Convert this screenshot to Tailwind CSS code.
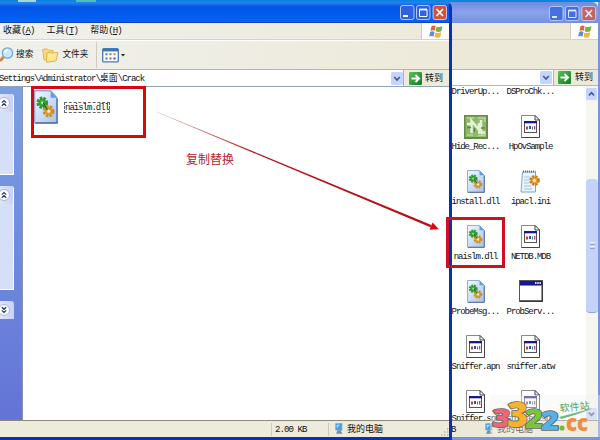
<!DOCTYPE html>
<html lang="zh-CN">
<head>
  <meta charset="UTF-8" />
  <meta name="viewport" content="width=device-width, initial-scale=1.0" />
  <title>Crack</title>
  <script src="https://cdn.jsdelivr.net/npm/@tailwindcss/browser@4"></script>
</head>
<body class="bg-[#0a86dc] overflow-hidden">

  <!-- shared icons -->
  <svg class="absolute w-0 h-0">
    <linearGradient id="page" x1="0" y1="0" x2="1" y2="1">
      <stop offset="0" stop-color="#f4faff" /><stop offset="1" stop-color="#a3c3f0" />
    </linearGradient>
    <linearGradient id="go" x1="0" y1="0" x2="1" y2="1">
      <stop offset="0" stop-color="#5cc05c" /><stop offset="1" stop-color="#0c7d1c" />
    </linearGradient>
    <symbol id="dll" viewBox="0 0 18 24" preserveAspectRatio="none">
      <path d="M.5.5H12.5L17.2 5.5V23.2H.5Z" fill="url(#page)" stroke="#8fabd6" />
      <path d="M17.3 6V23.3H1" fill="none" stroke="#55699c" />
      <path d="M12.5.5V5.5H17.2Z" fill="#5f9fe6" />
      <circle cx="6.2" cy="9" r="3.1" fill="#3cab3c" stroke="#2c992f" stroke-width="2.6" stroke-dasharray="1.7 .8" />
      <circle cx="11" cy="15" r="3.1" fill="#eaa832" stroke="#cf8d1f" stroke-width="2.6" stroke-dasharray="1.7 .8" />
      <circle cx="6.2" cy="9" r=".8" fill="#d3f2cc" /><circle cx="11" cy="15" r="1.1" fill="#eaf2fb" />
      <path d="M7 9L10 14" stroke="#1f6a28" stroke-width=".9" />
    </symbol>
    <symbol id="doc" viewBox="0 0 19 23">
      <path d="M.5.5H14L18.5 5V22.5H.5Z" fill="#fff" stroke="#8a8a8a" />
      <path d="M18.5 5V22.5H.5M14 .5V5H18.5Z" fill="#fff" stroke="#444" />
      <rect x="3.5" y="6.5" width="12" height="11" fill="#fff" stroke="#555" />
      <path d="M3 7.2H16" stroke="#15158c" stroke-width="2.2" />
      <path d="M5 11.5h2v3h-2z" fill="#c63a3a" /><path d="M8 11h2v3h-2z" fill="#3845b5" /><path d="M11 11.5h1v3h-1z" fill="#2a8b46" /><path d="M13 11h1.3v3.5h-1.3z" fill="#b33a86" />
    </symbol>
    <symbol id="ini" viewBox="0 0 22 23">
      <path d="M2.5 2H15.5V22H1Z" fill="#eaf4fd" stroke="#7fa6cc" />
      <path d="M3 1.5H15.5" stroke="#5a6b78" stroke-width="2" stroke-dasharray="1 1" />
      <path d="M4 7H10M4 10H9M4 13H9M4 16H11M4 19H12" stroke="#8fb6d8" stroke-width=".8" />
      <circle cx="14.5" cy="10.5" r="4" fill="#eaa137" stroke="#c4791a" stroke-width="2.6" stroke-dasharray="2 1.2" />
      <circle cx="14.5" cy="10.5" r="1.5" fill="#fff2cf" />
    </symbol>
    <symbol id="app" viewBox="0 0 24 22">
      <rect x=".5" y=".5" width="23" height="21" fill="#fff" stroke="#555" />
      <path d="M1 21H23.2V2" fill="none" stroke="#333" stroke-width="1.4" />
      <rect x="1" y="1" width="22" height="4" fill="#16169a" />
      <path d="M16 3H22" stroke="#ddd" stroke-width="2" stroke-dasharray="1.5 .7" />
      <path d="M1 5.5H23" stroke="#888" />
    </symbol>
    <symbol id="hide" viewBox="0 0 24 24">
      <rect width="24" height="24" fill="#668b4b" />
      <rect x="1.5" y="1.5" width="20.5" height="20.5" fill="#8dba68" />
      <path d="M3 3H10M14 3H21V7M3 20H9M14 20.5H21V16" stroke="#b8d59c" stroke-width="1.6" fill="none" />
      <path d="M3 9H9M15 8V16M7.5 18V6L17 17V5M14 17.5H21" stroke="#e4f2d5" stroke-width="2.6" fill="none" />
      <path d="M3 12.5H7M10.5 13V17M17 13H21" stroke="#5b853f" stroke-width="1.4" />
    </symbol>
    <symbol id="flag" viewBox="0 0 14 13">
      <path d="M2.5 1.2Q4.5 -.2 6.6 1L5.7 5.8Q3.6 4.8 1.4 6Z" fill="#e0643a" />
      <path d="M7.5 1.5Q10 2.7 13.4 1.2L12.4 6.2Q9.5 7.6 6.6 6.3Z" fill="#7fae48" />
      <path d="M1.2 7Q3.3 5.8 5.5 6.9L4.6 11.4Q2.4 10.5.2 11.6Z" fill="#5b8ed8" />
      <path d="M6.4 7.4Q9 8.6 12.2 7.2L11.3 12Q8.5 13.4 5.5 12Z" fill="#efb73c" />
    </symbol>
    <symbol id="arrow" viewBox="0 0 13 13">
      <rect width="13" height="13" rx="1.2" fill="url(#go)" />
      <path d="M2.5 6.5H10M6.5 3L10.2 6.5L6.5 10" fill="none" stroke="#fff" stroke-width="1.8" />
    </symbol>
    <symbol id="down" viewBox="0 0 12 13">
      <rect width="12" height="13" rx="1.5" fill="#c5d5fb" />
      <path d="M3.2 5L6 8L8.8 5" fill="none" stroke="#445a92" stroke-width="1.7" />
    </symbol>
    <symbol id="pc" viewBox="0 0 10 12">
      <path d="M1.5.8L8 0V7.6L1.5 7Z" fill="#4b9be0" stroke="#8fb4d6" stroke-width=".8" />
      <path d="M2.5 2L6 1.5L3 5.5Z" fill="#a9dcfa" />
      <path d="M3.5 7.5H6.5L8.5 10.8H2Z" fill="#6c8fb5" />
    </symbol>
    <symbol id="chev" viewBox="0 0 12 12">
      <circle cx="6" cy="6" r="5.5" fill="#fdfdff" stroke="#a9b6d6" />
      <path d="M3.8 5.6L6 3.5L8.2 5.6M3.8 8.8L6 6.7L8.2 8.8" fill="none" stroke="#23355f" stroke-width="1.2" />
    </symbol>
    <symbol id="btns" viewBox="0 0 47 15">
      <g stroke="#fff" stroke-opacity=".75" stroke-width=".9">
        <rect x=".5" y=".5" width="13.5" height="14" rx="2" fill="#2f62dc" />
        <rect x="16.5" y=".5" width="13.5" height="14" rx="2" fill="#2f62dc" />
        <rect x="33" y=".5" width="13.5" height="14" rx="2" fill="#d4523a" />
      </g>
      <path d="M3 11H8" stroke="#fff" stroke-width="2" />
      <path d="M19.5 4.5H27V11.5H19.5Z" fill="none" stroke="#fff" /><path d="M19.5 4.5H27" stroke="#fff" stroke-width="1.8" />
      <path d="M36.5 4L43 11M43 4L36.5 11" stroke="#fff" stroke-width="1.8" />
    </symbol>
  </svg>

  <main class="relative w-[600px] h-[440px] overflow-hidden font-['Liberation_Mono','Noto_Sans_CJK_SC',monospace] text-[9px] leading-none text-[#111]">
    <!-- desktop strip above the windows -->
    <div class="flex h-[2px] pl-[18px] gap-10">
      <i class="w-[18px] bg-[#a5d8cf]"></i><i class="w-5 bg-[#4cc0b4]"></i>
    </div>

    <!-- back window -->
    <section class="absolute left-[446px] top-[2px] w-[154px] h-[438px] flex flex-col bg-[#ece9d8] border-r-2 border-b-3 border-[#7b92e0]">
      <header class="h-[21px] shrink-0 flex items-center justify-end pr-[1px] rounded-tr-md bg-linear-to-b from-[#6d8ae0] via-[#8aa3ea] to-[#728fe4]">
        <svg class="w-[49px] h-[15px] opacity-75 mt-px"><use href="#btns" /></svg>
      </header>
      <div class="h-[17px] shrink-0 flex justify-end border-b border-[#d8d4c3]">
        <div class="w-[28px] bg-white border-l border-[#d0ccbb] flex items-center justify-center"><svg class="w-[14px] h-[13px]"><use href="#flag" /></svg></div>
      </div>
      <div class="h-[29px] shrink-0"></div>
      <div class="h-[17px] shrink-0 flex items-center border-y border-[#b5b8b0]">
        <div class="w-[108px] h-full bg-white flex items-center justify-end pr-px border-r border-[#9db5d6]"><svg class="w-[12px] h-[13px]"><use href="#down" /></svg></div>
        <svg class="w-[13px] h-[13px] ml-1"><use href="#arrow" /></svg>
        <span class="ml-[4px] pt-[2px]">转到</span>
      </div>
      <div class="flex-1 min-h-0 flex bg-white">
        <div class="w-[140px] overflow-hidden">
          <div id="files" class="grid grid-cols-[55px_55px] pl-[2px]"></div>
        </div>
        <div class="flex-1 flex flex-col bg-[#f6f5f0] pt-[2px]">
          <svg class="w-[11px] h-[12px] rotate-180"><use href="#down" /></svg>
          <div class="mt-[79px] mb-auto h-[134px] rounded-sm bg-[#c5d3fb] border-b border-[#8fa6dd] flex flex-col items-center justify-center gap-px">
            <i class="w-[5px] h-px bg-[#eef3ff]"></i><i class="w-[5px] h-px bg-[#8ca4de]"></i><i class="w-[5px] h-px bg-[#eef3ff]"></i><i class="w-[5px] h-px bg-[#8ca4de]"></i>
          </div>
          <svg class="w-[11px] h-[12px]"><use href="#down" /></svg>
        </div>
      </div>
      <footer class="h-[17px] shrink-0 flex items-center border-t border-[#8d8a7c]">
        <span class="ml-[5px] w-[28px] pt-[2px]">B</span>
        <svg class="w-[10px] h-[12px] ml-[5px]"><use href="#pc" /></svg>
        <span class="ml-[3px] pt-[2px]">我的电脑</span>
      </footer>
    </section>

    <!-- front window -->
    <section class="absolute left-0 top-[2px] w-[452px] h-[438px] flex flex-col bg-[#edebdb] border-r-3 border-b-3 border-[#0831b8] rounded-tr-md">
      <header class="h-[21px] shrink-0 flex items-center justify-end pr-px bg-linear-to-b from-[#2a86f4] via-[#0454e2] via-25% to-[#0262fc] border-b border-[#0a45c0]">
        <svg class="w-[49px] h-[15px] mt-px"><use href="#btns" /></svg>
      </header>
      <div class="h-[17px] shrink-0 flex border-b border-[#d8d4c3] pl-[3px] bg-linear-to-r from-[#f0f0ec] to-[#edeada]">
        <nav class="flex gap-[12px] items-center flex-1 pt-px">
          <span>收藏<span class="tracking-[-0.9px]">(<u>A</u>)</span></span>
          <span>工具<span class="tracking-[-0.9px]">(<u>T</u>)</span></span>
          <span>帮助<span class="tracking-[-0.9px]">(<u>H</u>)</span></span>
        </nav>
        <div class="w-[28px] bg-white border-l border-[#d0ccbb] flex items-center justify-center"><svg class="w-[14px] h-[13px]"><use href="#flag" /></svg></div>
      </div>
      <div class="h-[29px] shrink-0 flex items-center border-t border-white bg-linear-to-r from-[#f0f0ec] to-[#edeada]">
        <svg class="w-[14px] h-[16px]" viewBox="0 0 14 16">
          <path d="M3.5 10L0 14" stroke="#c98a4b" stroke-width="3" />
          <circle cx="7.5" cy="6" r="5.2" fill="#c6e8fb" stroke="#7aa4d6" stroke-width="1.3" />
          <path d="M5 6Q5 3.3 8 3" fill="none" stroke="#fff" stroke-width="1.3" />
        </svg>
        <span class="ml-[2px] pt-px text-[8.7px]">搜索</span>
        <svg class="w-[17px] h-[15px] ml-[9px]" viewBox="0 0 17 15">
          <path d="M.7 1.5L5 .7L6.5 2.2L11 2.4V11L2 12Z" fill="#f6dc78" stroke="#d8ad42" stroke-width=".8" />
          <path d="M5 5L8 4L9.5 5L16 4.5L14 13L4.5 14.3Z" fill="#fbe88f" stroke="#d6a738" stroke-width=".8" />
        </svg>
        <span class="ml-[3px] pt-px text-[8.7px]">文件夹</span>
        <i class="ml-[8px] w-px h-[26px] bg-[#cfccbd]"></i>
        <svg class="w-[24px] h-[15px] ml-[5px]" viewBox="0 0 24 15">
          <rect x=".7" y=".7" width="15.6" height="13.2" rx="1" fill="#f7fbff" stroke="#457bb8" stroke-width="1.3" />
          <path d="M.7 2.2H16.3" stroke="#3b73b7" stroke-width="2.4" />
          <path d="M3.5 6.2h2M3.5 10.5h2" stroke="#5372c4" stroke-width="2" />
          <path d="M7.5 6.2h2" stroke="#4aa25a" stroke-width="2" /><path d="M7.5 10.5h2" stroke="#c45d54" stroke-width="2" />
          <path d="M11.5 6.2h2" stroke="#d08940" stroke-width="2" /><path d="M11.5 10.5h2" stroke="#36519e" stroke-width="2" />
          <path d="M19 6H23L21 8.6Z" fill="#222" />
        </svg>
      </div>
      <div class="h-[17px] shrink-0 flex items-center border-t border-[#b0b6b4]">
        <div class="w-[404px] h-full bg-white flex items-center justify-between border-r border-[#9db5d6]">
          <span class="whitespace-nowrap -ml-px pt-[2px]"><span class="tracking-[-1.02px]">Settings\Administrator\</span>桌面<span class="tracking-[-1.02px]">\Crack</span></span>
          <svg class="w-[12px] h-[13px]"><use href="#down" /></svg>
        </div>
        <svg class="w-[13px] h-[13px] ml-[5px]"><use href="#arrow" /></svg>
        <span class="ml-[3px] pt-[2px]">转到</span>
      </div>
      <div class="flex-1 flex bg-white border-t border-[#8fa3b3]">
        <aside class="w-[23px] border-r border-[#8d8fb4] bg-linear-to-b from-[#7ba0e4] to-[#6373d6] pt-[7px] pr-[8px] flex flex-col gap-[11px]">
          <div class="h-[81px] bg-[#d6dff8] border-r border-b border-white rounded-tr-[3px]">
            <div class="h-[18px] bg-linear-to-r from-[#dfe5fa] to-[#c6d2f6] rounded-tr-[3px] flex items-center"><svg class="w-[12px] h-[12px] -ml-[2px]"><use href="#chev" /></svg></div>
          </div>
          <div class="h-[104px] bg-[#d6dff8] border-r border-b border-white rounded-tr-[3px]">
            <div class="h-[18px] bg-linear-to-r from-[#dfe5fa] to-[#c6d2f6] rounded-tr-[3px] flex items-center"><svg class="w-[12px] h-[12px] -ml-[2px]"><use href="#chev" /></svg></div>
          </div>
          <div class="h-[18px] bg-linear-to-r from-[#dfe5fa] to-[#c6d2f6] rounded-tr-[3px] flex items-center"><svg class="w-[12px] h-[12px] -ml-[2px] rotate-180"><use href="#chev" /></svg></div>
        </aside>
        <div class="flex items-start pt-[3px] pl-[11px]">
          <svg class="w-[24px] h-[34px]"><use href="#dll" /></svg>
          <span class="mt-[12px] ml-[6px] w-[46px] h-[11px] leading-[11px] border border-dashed border-[#666] tracking-[-1px]">naislm.dll</span>
        </div>
      </div>
      <footer class="h-[17px] shrink-0 flex items-center border-t border-[#8d8a7c]">
        <span class="ml-[271px] pl-[3px] w-[57px] h-[13px] leading-[15px] border-l border-[#cdc9b6] tracking-[-0.9px]">2.00 KB</span>
        <span class="flex-1 flex items-center h-[13px] border-l border-[#cdc9b6]">
          <svg class="w-[10px] h-[12px] ml-[5px]"><use href="#pc" /></svg>
          <span class="ml-[3px] pt-[2px]">我的电脑</span>
        </span>
        <svg class="w-[9px] h-[9px] self-end" viewBox="0 0 9 9"><path d="M7 1h1.3M4 4h1.3M7 4h1.3M1 7h1.3M4 7h1.3M7 7h1.3" stroke="#b5b09b" stroke-width="1.3" /></svg>
      </footer>
    </section>

    <!-- red annotations -->
    <div class="absolute left-[31px] top-[86px] w-[115px] h-[52px] border-3 border-[#d40a12]"></div>
    <div class="absolute left-[446px] top-[217px] w-[59px] h-[51px] border-3 border-[#d01020]"></div>
    <svg class="absolute left-0 top-0 w-[600px] h-[440px]" viewBox="0 0 600 440">
      <linearGradient id="fade" gradientUnits="userSpaceOnUse" x1="157" y1="112" x2="260" y2="155">
        <stop offset="0" stop-color="#b01820" stop-opacity=".25" /><stop offset="1" stop-color="#b81018" />
      </linearGradient>
      <path d="M157 111.7L431.4 225L430.5 227.3L156.8 112.2Z" fill="url(#fade)" />
      <path d="M432.5 222.5L439 229.2L429.5 229.8Z" fill="#d40a12" />
    </svg>
    <p class="absolute left-[186px] top-[155px] text-[12px] text-[#b5242c] whitespace-nowrap">复制替换</p>

    <!-- site watermark -->
    <svg class="absolute left-[490px] top-[395px] w-[110px] h-[42px] font-['Open_Sans','Noto_Sans_CJK_SC',sans-serif]" viewBox="0 0 110 42">
      <rect width="110" height="42" fill="#f2f2ee" fill-opacity=".4" />
      <g font-weight="800" stroke="#666" stroke-width="1.6" paint-order="stroke" stroke-linejoin="round">
        <text x="2" y="32" font-size="25" fill="#ee6678" textLength="19" lengthAdjust="spacingAndGlyphs">3</text>
        <text x="17" y="32" font-size="35" fill="#f8b32c" textLength="21" lengthAdjust="spacingAndGlyphs">3</text>
        <text x="35" y="33" font-size="27" fill="#79c440" textLength="18" lengthAdjust="spacingAndGlyphs">2</text>
        <text x="51" y="35" font-size="26" fill="#55b2e8" textLength="18" lengthAdjust="spacingAndGlyphs">2</text>
      </g>
      <circle cx="72" cy="33" r="2.6" fill="#7ab83d" />
      <text x="76" y="36" font-size="23" font-weight="800" fill="#f28a45" textLength="22" lengthAdjust="spacingAndGlyphs">cc</text>
      <text x="70" y="17" font-size="10" fill="#4da35d" transform="rotate(-6 70 17)">软件站</text>
      <path d="M69 22Q85 18 103 13Q90 19 71 24" fill="#76b97e" />
    </svg>
  </main>

  <script>
    const files = [
      ["hide", "Hide_Rec..."], ["doc", "HpOvSample"],
      ["dll", "install.dll"], ["ini", "ipacl.ini"],
      ["dll", "naislm.dll"], ["doc", "NETDB.MDB"],
      ["dll", "ProbeMsg..."], ["app", "ProbServ..."],
      ["doc", "Sniffer.apn"], ["doc", "sniffer.atw"],
      ["doc", "Sniffer.snf"], ["doc", "sniffer.sup"],
    ];
    const sizes = {
      hide: "w-[24px] h-[24px]",
      doc: "w-[19px] h-[23px]",
      dll: "w-[18px] h-[23px]",
      ini: "w-[22px] h-[23px]",
      app: "w-[24px] h-[22px]",
    };
    const label = name => `<span class="tracking-[-1.05px] whitespace-nowrap">${name}</span>`;

    // first row is scrolled, only its labels are visible
    let html = ["DriverUp...", "DSProChk..."].map(n => `<div class="h-[29px] pt-[2px] flex justify-center">${label(n)}</div>`).join("");
    files.forEach(([icon, name], i) => {
      // last row sits a little tighter, against the status bar
      const box = i > 9 ? "h-[25px]" : "h-[28px]";
      html += `
        <div class="h-[55px] flex flex-col items-center">
          <div class="${box} shrink-0"><svg class="${sizes[icon]}"><use href="#${icon}" /></svg></div>
          ${label(name)}
        </div>`;
    });
    document.getElementById("files").innerHTML = html;
  </script>
</body>
</html>
